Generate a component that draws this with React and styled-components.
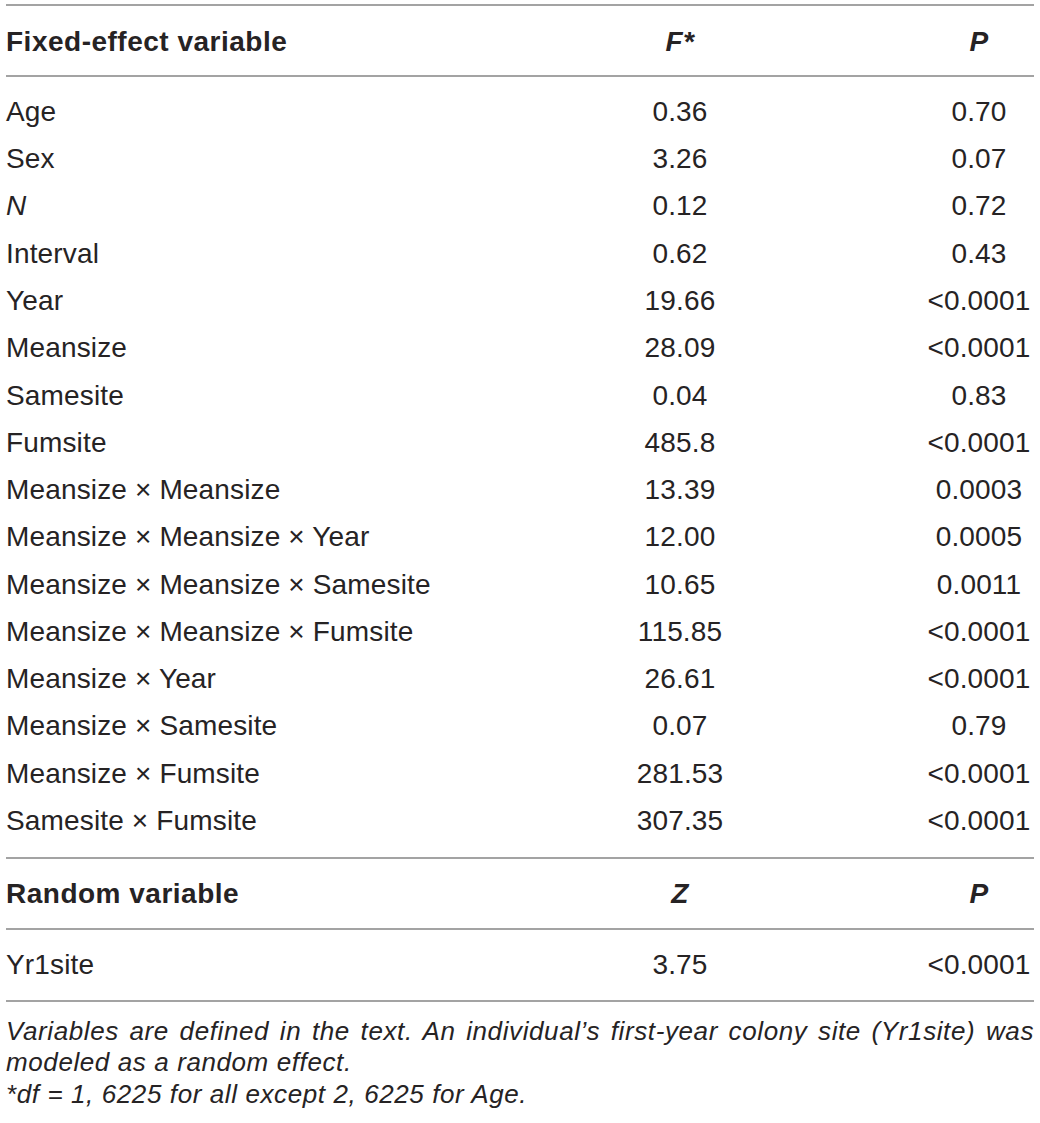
import React from "react";
import styled, { createGlobalStyle } from "styled-components";

const GlobalStyle = createGlobalStyle`
  html, body {
    margin: 0;
    padding: 0;
    background: #ffffff;
  }
  body {
    font-family: "Liberation Sans", Arial, Helvetica, sans-serif;
    color: #262324;
  }
`;

const Page = styled.div`
  width: 1028px;
  padding: 4px 6px 0;
`;

const Grid = styled.div`
  display: grid;
  grid-template-columns: minmax(0, 1fr) 200px 110px;
  column-gap: 144px;
  align-items: center;
`;

const HeadRow = styled(Grid)`
  border-top: ${(p) => (p.first ? "2px solid #a3a3a3" : "none")};
  border-bottom: 2px solid #a3a3a3;
  padding: ${(p) => (p.first ? "21px 0 18px" : "20px 0 19px")};
`;

const Section = styled.div`
  padding: ${(p) => p.pad || "0"};
  border-bottom: 2px solid #a3a3a3;
`;

const Row = styled(Grid)`
  height: ${(p) => p.h || "47.27px"};
`;

const Cell = styled.div`
  font-size: 28px;
  line-height: 30px;
  letter-spacing: ${(p) => (p.head ? "0.5px" : "0.15px")};
  white-space: nowrap;
  font-weight: ${(p) => (p.head ? 700 : 400)};
  font-style: ${(p) => (p.italic ? "italic" : "normal")};
  text-align: ${(p) => (p.center ? "center" : "left")};
`;

const Note = styled.p`
  margin: 14px 0 0;
  font-size: 26px;
  line-height: 31.5px;
  font-style: italic;
  letter-spacing: 0.6px;
`;

const NoteLine = styled.span`
  display: block;
  text-align: ${(p) => (p.full ? "justify" : "left")};
  text-align-last: ${(p) => (p.full ? "justify" : "left")};
  white-space: nowrap;
`;

const fixed = [
  ["Age", "0.36", "0.70"],
  ["Sex", "3.26", "0.07"],
  ["N", "0.12", "0.72", true],
  ["Interval", "0.62", "0.43"],
  ["Year", "19.66", "<0.0001"],
  ["Meansize", "28.09", "<0.0001"],
  ["Samesite", "0.04", "0.83"],
  ["Fumsite", "485.8", "<0.0001"],
  ["Meansize × Meansize", "13.39", "0.0003"],
  ["Meansize × Meansize × Year", "12.00", "0.0005"],
  ["Meansize × Meansize × Samesite", "10.65", "0.0011"],
  ["Meansize × Meansize × Fumsite", "115.85", "<0.0001"],
  ["Meansize × Year", "26.61", "<0.0001"],
  ["Meansize × Samesite", "0.07", "0.79"],
  ["Meansize × Fumsite", "281.53", "<0.0001"],
  ["Samesite × Fumsite", "307.35", "<0.0001"],
];

export default function App() {
  return (
    <Page>
      <GlobalStyle />
      <HeadRow first>
        <Cell head>Fixed-effect variable</Cell>
        <Cell head italic center>F*</Cell>
        <Cell head italic center>P</Cell>
      </HeadRow>
      <Section pad="11.3px 0 12.3px">
        {fixed.map(([name, f, p, it]) => (
          <Row key={name}>
            <Cell italic={it}>{name}</Cell>
            <Cell center>{f}</Cell>
            <Cell center>{p}</Cell>
          </Row>
        ))}
      </Section>
      <HeadRow>
        <Cell head>Random variable</Cell>
        <Cell head italic center>Z</Cell>
        <Cell head italic center>P</Cell>
      </HeadRow>
      <Section>
        <Row h="70px">
          <Cell>Yr1site</Cell>
          <Cell center>3.75</Cell>
          <Cell center>&lt;0.0001</Cell>
        </Row>
      </Section>
      <Note>
        <NoteLine full>
          Variables are defined in the text. An individual’s first-year colony
          site (Yr1site) was
        </NoteLine>
        <NoteLine>modeled as a random effect.</NoteLine>
        <NoteLine>*df = 1, 6225 for all except 2, 6225 for Age.</NoteLine>
      </Note>
    </Page>
  );
}
